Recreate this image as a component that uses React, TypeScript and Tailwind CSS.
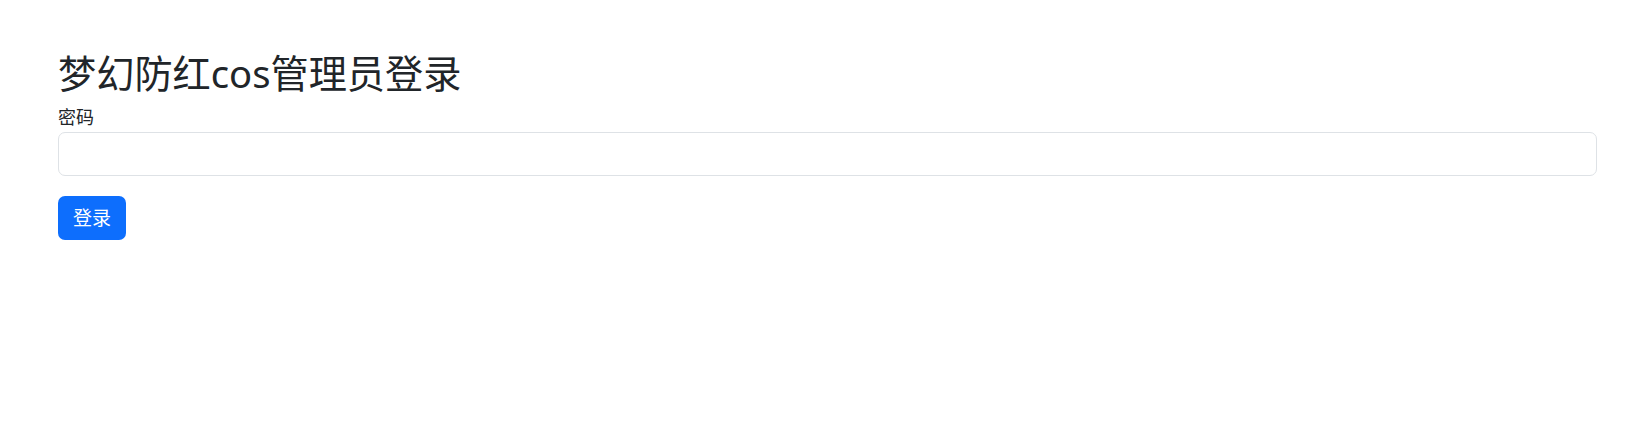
import React from "react";

export default function App() {
  return (
    <div
      className="w-[1636px] h-[425px] bg-white text-[#212529] pl-[58px] pr-[39px] pt-[50px]"
      style={{ fontFamily: '"Noto Sans", "Noto Sans CJK SC", sans-serif' }}
    >
      <h1 className="text-[38.2px] leading-[46px] font-normal mb-[8px]">梦幻防红cos管理员登录</h1>
      <label className="block text-[18px] leading-[26px] mb-[2px]">密码</label>
      <input
        type="password"
        className="block w-full h-[44px] border border-[#dee2e6] rounded-[7px] bg-white px-[14px] outline-none"
      />
      <button className="mt-[20px] h-[44px] px-[15px] bg-[#0d6efd] text-white text-[19px] leading-[26px] rounded-[7px]">
        登录
      </button>
    </div>
  );
}
